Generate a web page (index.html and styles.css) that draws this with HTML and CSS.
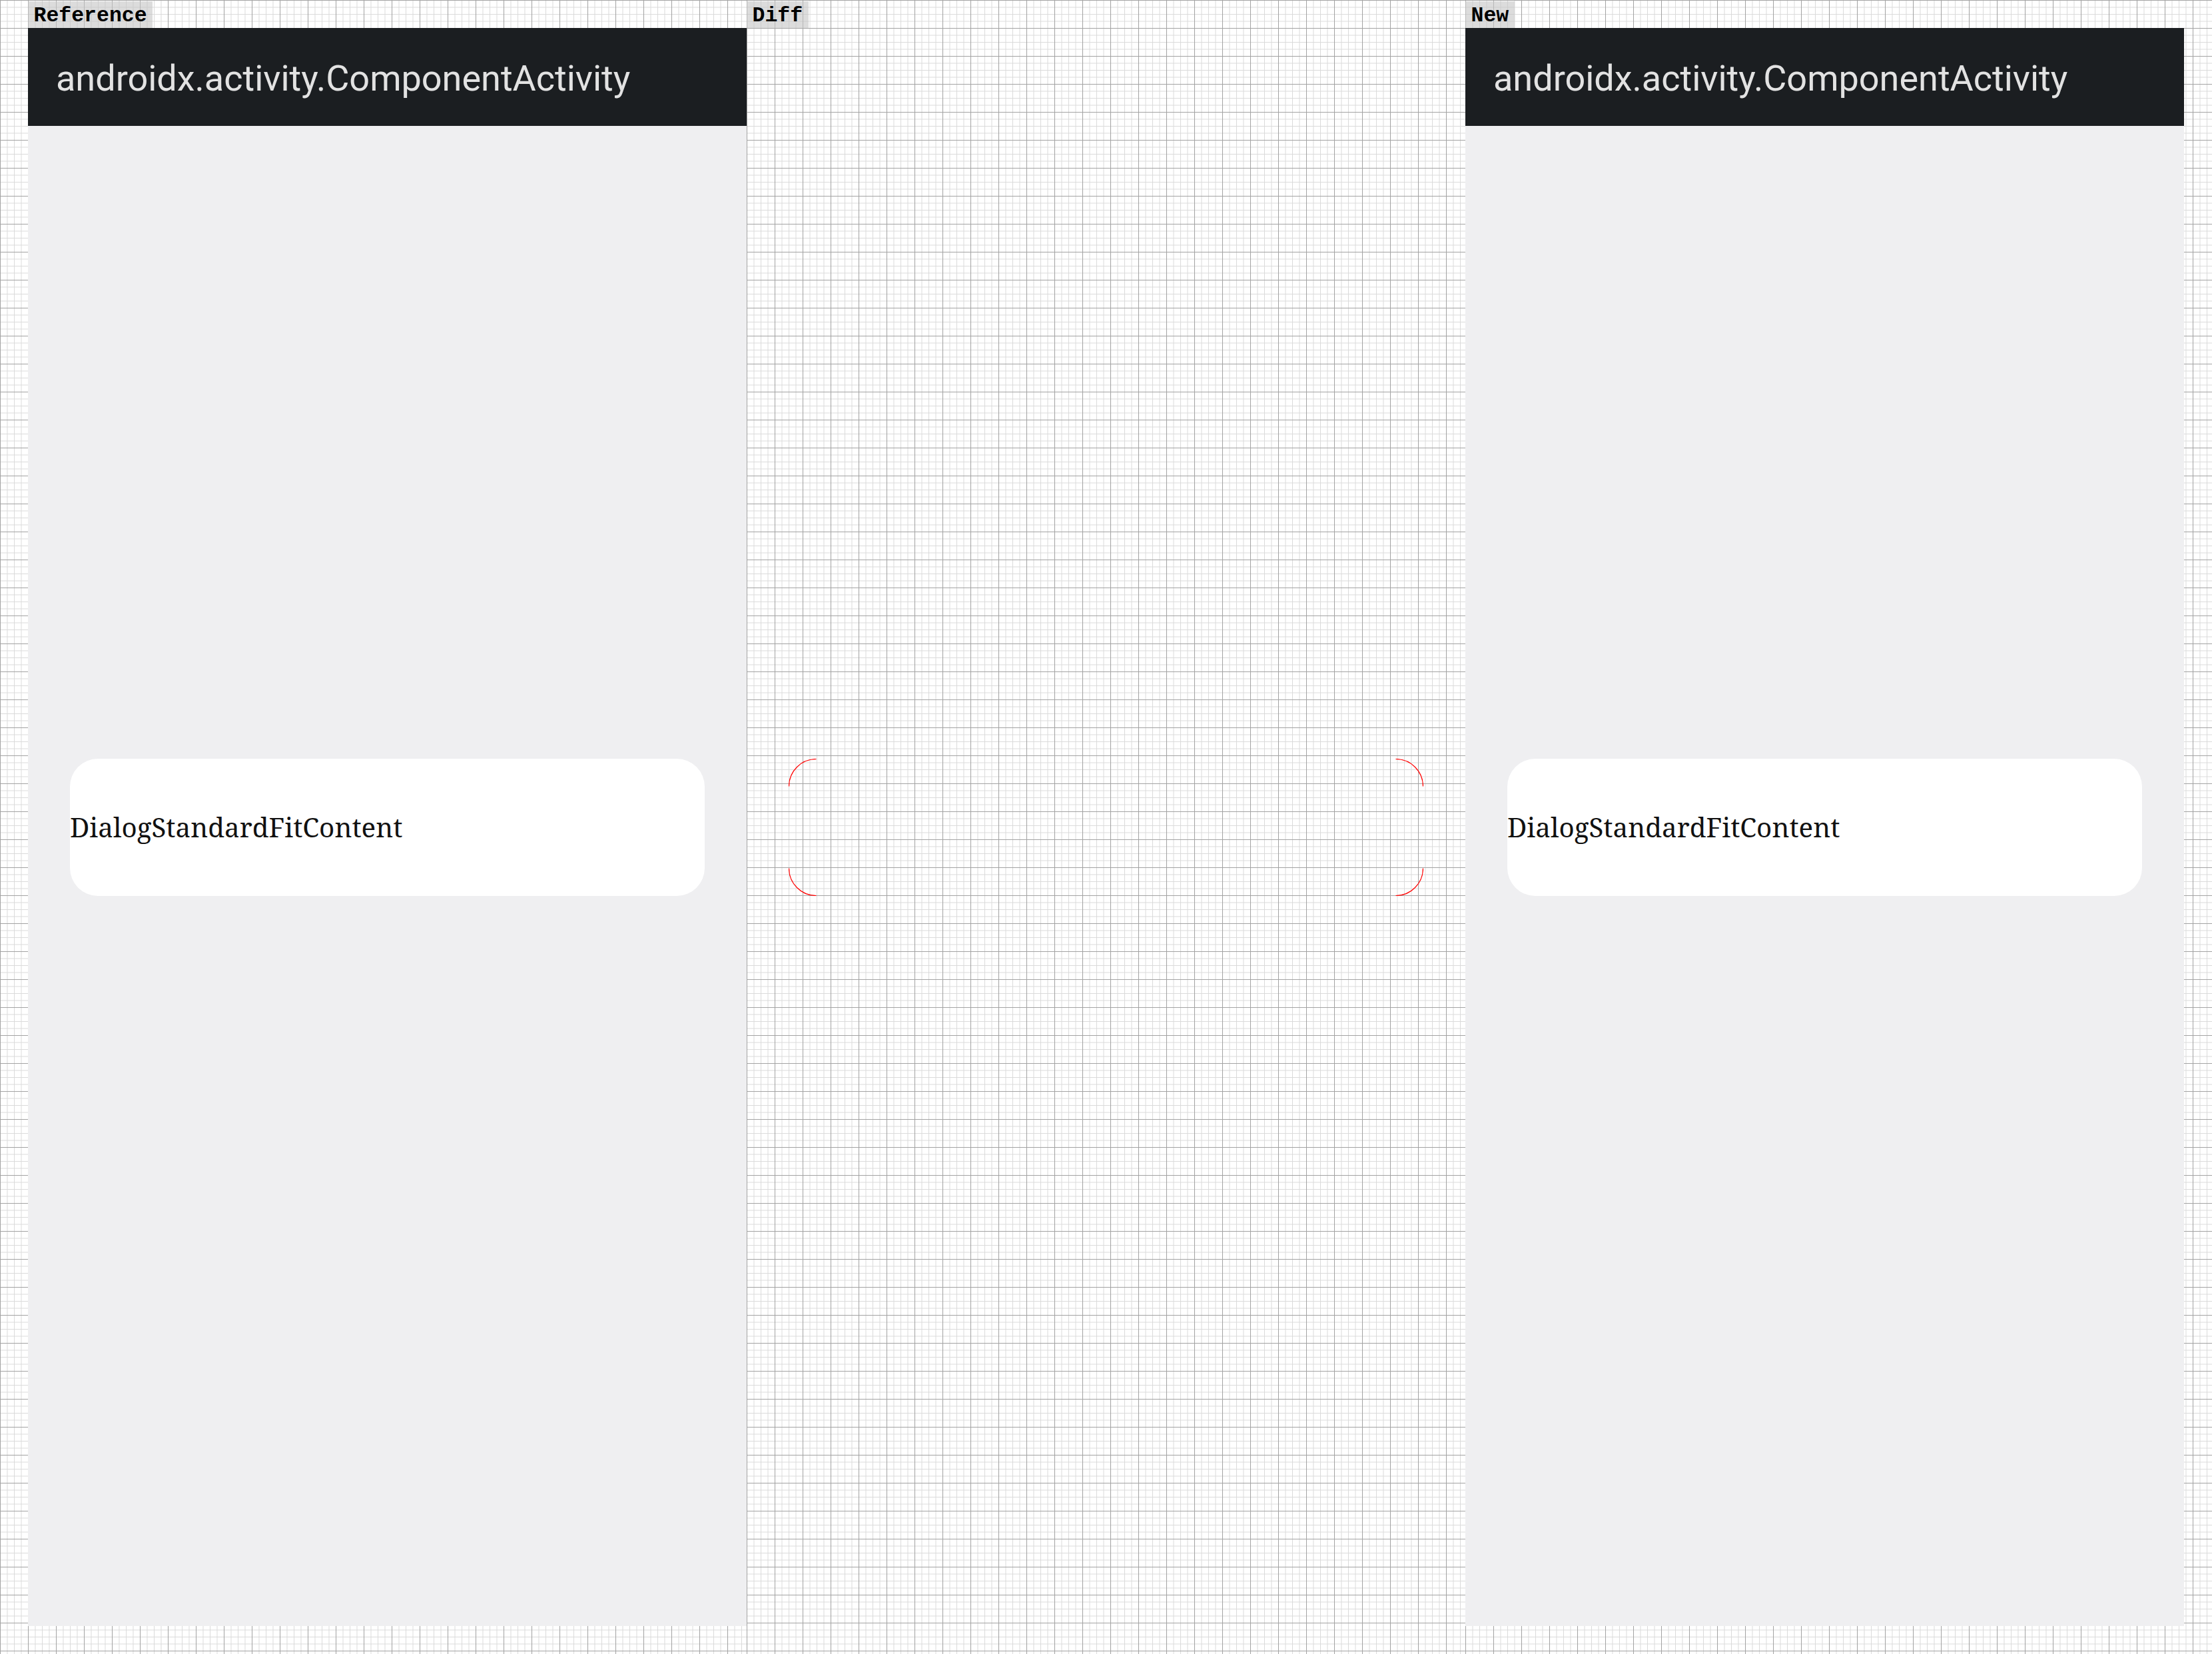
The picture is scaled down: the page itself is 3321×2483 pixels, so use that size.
FILE: index.html
```html
<!DOCTYPE html>
<html lang="en">
<head>
<meta charset="utf-8">
<title>Screenshot comparison</title>
<link rel="stylesheet" href="styles.css">
</head>
<body>
<div class="compare">
  <section class="col col-ref">
    <div class="label-row"><span class="label">Reference</span></div>
    <div class="panel screen">
      <header class="appbar">androidx.activity.ComponentActivity</header>
      <div class="dialog-layer">
        <div class="dialog"><span class="dialog-text">DialogStandardFitContent</span></div>
      </div>
    </div>
  </section>
  <section class="col col-diff">
    <div class="label-row"><span class="label">Diff</span></div>
    <div class="panel diff">
      <div class="dialog-layer">
        <svg class="diff-arcs" width="953" height="206" viewBox="0 0 953 206" aria-hidden="true">
          <path d="M0.5 41.5 A41 41 0 0 1 41.5 0.5"/>
          <path d="M911.5 0.5 A41 41 0 0 1 952.5 41.5"/>
          <path d="M0.5 164.5 A41 41 0 0 0 41.5 205.5"/>
          <path d="M952.5 164.5 A41 41 0 0 1 911.5 205.5"/>
        </svg>
      </div>
    </div>
  </section>
  <section class="col col-new">
    <div class="label-row"><span class="label">New</span></div>
    <div class="panel screen">
      <header class="appbar">androidx.activity.ComponentActivity</header>
      <div class="dialog-layer">
        <div class="dialog"><span class="dialog-text">DialogStandardFitContent</span></div>
      </div>
    </div>
  </section>
</div>
</body>
</html>
```
FILE: styles.css
```css
html, body {
  margin: 0;
  padding: 0;
  background: #ffffff;
}

.compare {
  display: flex;
  width: 3321px;
  height: 2483px;
  overflow: hidden;
}

.col {
  box-sizing: border-box;
  height: 2483px;
  display: flex;
  flex-direction: column;
  background-color: #ffffff;
  background-image:
    linear-gradient(to right, #a3a3a3 1px, transparent 1px),
    linear-gradient(to bottom, #a3a3a3 1px, transparent 1px),
    linear-gradient(to right, #dadada 1px, transparent 1px),
    linear-gradient(to bottom, #dadada 1px, transparent 1px);
  background-size: 42px 42px, 42px 42px, 10.5px 10.5px, 10.5px 10.5px;
  background-position: 0 0;
}

.col-ref {
  width: 1121px;
  padding-left: 42px;
}

.col-diff {
  width: 1079px;
}

.col-new {
  width: 1121px;
  padding-right: 42px;
}

.label-row {
  height: 42px;
  display: flex;
  align-items: flex-end;
}

.label {
  height: 40px;
  line-height: 40px;
  padding: 2px 8.5px 0;
  box-sizing: border-box;
  font-family: "Liberation Mono", "DejaVu Sans Mono", monospace;
  font-weight: bold;
  font-size: 31.5px;
  color: #000000;
  background: rgba(196, 196, 196, 0.6);
}

.panel {
  position: relative;
  width: 1079px;
  height: 2399px;
}

.screen {
  background: #efeff1;
}

.appbar {
  height: 147px;
  box-sizing: border-box;
  padding: 4px 0 0 42px;
  display: flex;
  align-items: center;
  background: #1b1e21;
  color: #e2e2e2;
  font-family: Roboto, "Noto Sans", sans-serif;
  font-size: 54px;
}

.dialog-layer {
  position: absolute;
  inset: 0;
  display: flex;
  align-items: center;
  justify-content: center;
  padding: 0 63px;
}

.dialog {
  flex: 1;
  height: 206px;
  border-radius: 42px;
  background: #ffffff;
  display: flex;
  align-items: center;
}

.dialog-text {
  font-family: "Noto Serif", "DejaVu Serif", serif;
  font-size: 40.35px;
  color: #111111;
}

.diff-arcs {
  display: block;
  fill: none;
  stroke: #ff0000;
  stroke-width: 1.2;
}
```
